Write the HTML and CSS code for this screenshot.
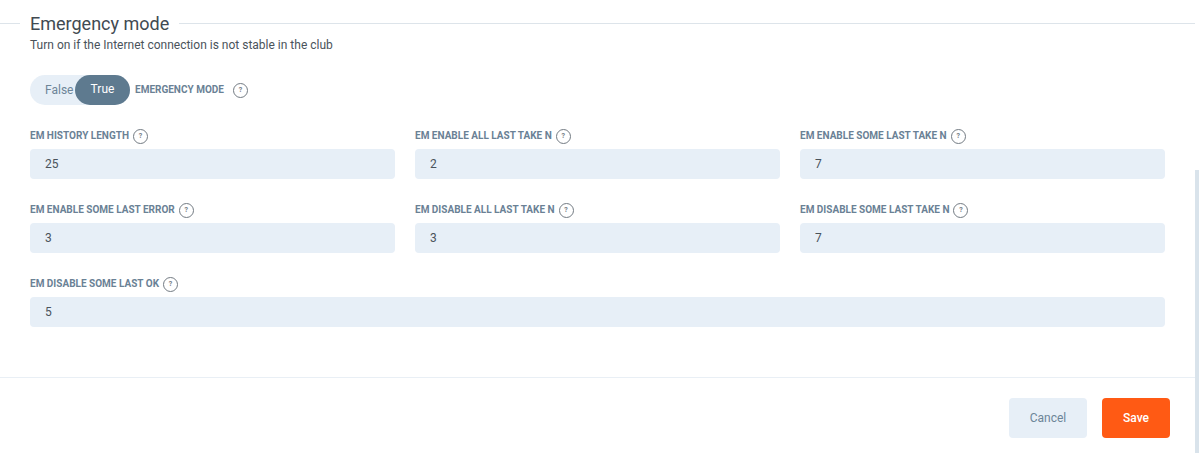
FILE: index.html
```html
<!DOCTYPE html>
<html lang="en">
<head>
<meta charset="utf-8">
<title>Emergency mode</title>
<link rel="stylesheet" href="styles.css">
</head>
<body>
<div class="page">
  <section class="content">
    <div class="legend">
      <span class="rule rule-short"></span>
      <h2 class="title">Emergency mode</h2>
      <span class="rule"></span>
    </div>
    <p class="sub">Turn on if the Internet connection is not stable in the club</p>
    <div class="toggle-row">
      <div class="toggle">
        <span class="opt">False</span>
        <span class="opt opt-on">True</span>
      </div>
      <span class="label">EMERGENCY MODE</span>
      <span class="help help-wide">?</span>
    </div>
    <div class="grid">
      <div class="field">
        <div class="field-label"><span class="label">EM HISTORY LENGTH</span><span class="help">?</span></div>
        <div class="input">25</div>
      </div>
      <div class="field">
        <div class="field-label"><span class="label">EM ENABLE ALL LAST TAKE N</span><span class="help">?</span></div>
        <div class="input">2</div>
      </div>
      <div class="field">
        <div class="field-label"><span class="label">EM ENABLE SOME LAST TAKE N</span><span class="help">?</span></div>
        <div class="input">7</div>
      </div>
      <div class="field">
        <div class="field-label"><span class="label">EM ENABLE SOME LAST ERROR</span><span class="help">?</span></div>
        <div class="input">3</div>
      </div>
      <div class="field">
        <div class="field-label"><span class="label">EM DISABLE ALL LAST TAKE N</span><span class="help">?</span></div>
        <div class="input">3</div>
      </div>
      <div class="field">
        <div class="field-label"><span class="label">EM DISABLE SOME LAST TAKE N</span><span class="help">?</span></div>
        <div class="input">7</div>
      </div>
      <div class="field field-full">
        <div class="field-label"><span class="label">EM DISABLE SOME LAST OK</span><span class="help">?</span></div>
        <div class="input">5</div>
      </div>
    </div>
  </section>
  <footer class="footer">
    <button class="btn btn-cancel" type="button">Cancel</button>
    <button class="btn btn-save" type="button">Save</button>
  </footer>
  <div class="scrollbar"></div>
</div>
</body>
</html>
```
FILE: styles.css
```css
* { box-sizing: border-box; }
html, body { margin: 0; padding: 0; background: #fff; overflow: hidden; }
body { font-family: Roboto, "Liberation Sans", sans-serif; color: #333e48; }
.page { position: relative; width: 1199px; height: 462px; padding-top: 13px; }
.content { height: 365px; padding-right: 4px; border-bottom: 1px solid #e9eff5; }
.legend { display: flex; align-items: center; height: 21px; }
.rule { flex: 1; height: 1px; background: #dde4ea; }
.rule-short { flex: 0 0 20px; }
.title { margin: 0; padding: 0 10px; font-size: 18px; font-weight: 400; line-height: 21px; color: #414a52; }
.sub { margin: 3px 0 0 30px; font-size: 12px; line-height: 16px; color: #4a535b; }
.toggle-row { display: flex; align-items: center; margin: 22px 0 0 30px; height: 30px; }
.toggle { display: flex; align-items: center; width: 100px; height: 30px; border-radius: 15px; background: #e7eff7; font-size: 12px; }
.opt { padding-left: 15px; width: 45px; color: #6d8598; white-space: nowrap; }
.opt-on { width: 55px; height: 30px; padding: 0; border-radius: 15px; background: #5e7a8f; color: #fff; text-align: center; line-height: 28px; }
.label { font-size: 10px; font-weight: 700; line-height: 12px; color: #6a8195; white-space: nowrap; }
.toggle-row .label { margin-left: 5px; }
.help { display: flex; align-items: center; justify-content: center; flex: none; width: 15px; height: 15px; margin-left: 4px; border: 1px solid #737b83; border-radius: 50%; font-size: 7px; font-weight: 700; color: #737b83; }
.help-wide { margin-left: 9px; }
.grid { display: grid; grid-template-columns: repeat(3, 365px); column-gap: 20px; row-gap: 21px; margin: 21px 0 0 30px; }
.field-full { grid-column: 1 / -1; }
.field-label { display: flex; align-items: center; height: 20px; margin-bottom: 3px; }
.input { display: flex; align-items: center; height: 30px; padding-left: 15px; border-radius: 4px; background: #e7eff7; font-size: 12px; color: #4a535b; }
.footer { display: flex; justify-content: flex-end; gap: 15px; padding: 20px 29px 0 0; }
.btn { width: 78px; height: 40px; padding: 0; border: 0; border-radius: 4px; font-family: inherit; font-size: 12px; }
.btn-cancel { background: #e7eff7; color: #6d8598; }
.btn-save { width: 68px; background: #ff5a14; color: #fff; font-weight: 500; }
.scrollbar { position: absolute; top: 170px; right: 0; width: 4px; height: 283px; background: #d9e3eb; }
```
